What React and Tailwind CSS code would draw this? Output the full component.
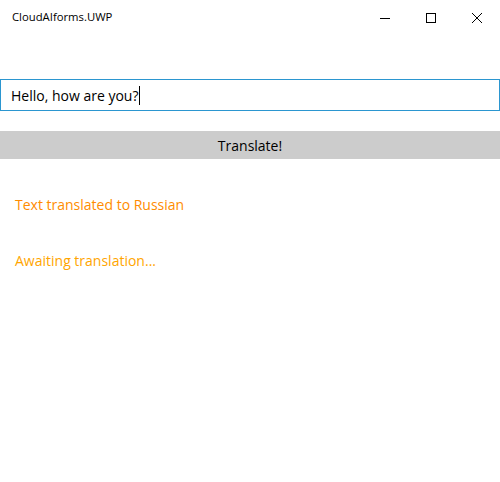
export default function App() {
  const font = { fontFamily: '"Open Sans", "Noto Sans", sans-serif' };
  return (
    <div className="w-[500px] h-[482px] bg-white flex flex-col" style={font}>
      <div className="h-[32px] flex items-center">
        <div className="pl-[12px] pt-[3px] text-[11.3px] text-black flex-1">CloudAIforms.UWP</div>
        <div className="flex h-[32px] pt-[4px]">
          <div className="w-[46px] flex items-center justify-center">
            <svg width="10" height="10" viewBox="0 0 10 10"><path d="M0 5.5h10" stroke="#000" strokeWidth="1" /></svg>
          </div>
          <div className="w-[46px] flex items-center justify-center">
            <svg width="10" height="10" viewBox="0 0 10 10"><rect x="0.5" y="0.5" width="9" height="9" fill="none" stroke="#000" strokeWidth="1" /></svg>
          </div>
          <div className="w-[46px] flex items-center justify-center">
            <svg width="10" height="10" viewBox="0 0 10 10"><path d="M0 0L10 10M10 0L0 10" stroke="#000" strokeWidth="1" /></svg>
          </div>
        </div>
      </div>
      <div className="h-[47px]" />
      <div className="h-[32px] border border-[#2b96d0] flex items-center pl-[10px] text-[14px] text-black">
        <span>Hello, how are you?</span>
        <span className="w-px h-[19px] bg-black" />
      </div>
      <div className="h-[20px]" />
      <div className="h-[28px] bg-[#cccccc] flex items-center justify-center text-[14px] text-black">Translate!</div>
      <div className="pl-[15px] pt-[36px] text-[14px] text-[#ff8c00] leading-[20px]">Text translated to Russian</div>
      <div className="pl-[15px] pt-[36px] text-[14px] text-[#ffa500] leading-[20px]">Awaiting translation...</div>
    </div>
  );
}
